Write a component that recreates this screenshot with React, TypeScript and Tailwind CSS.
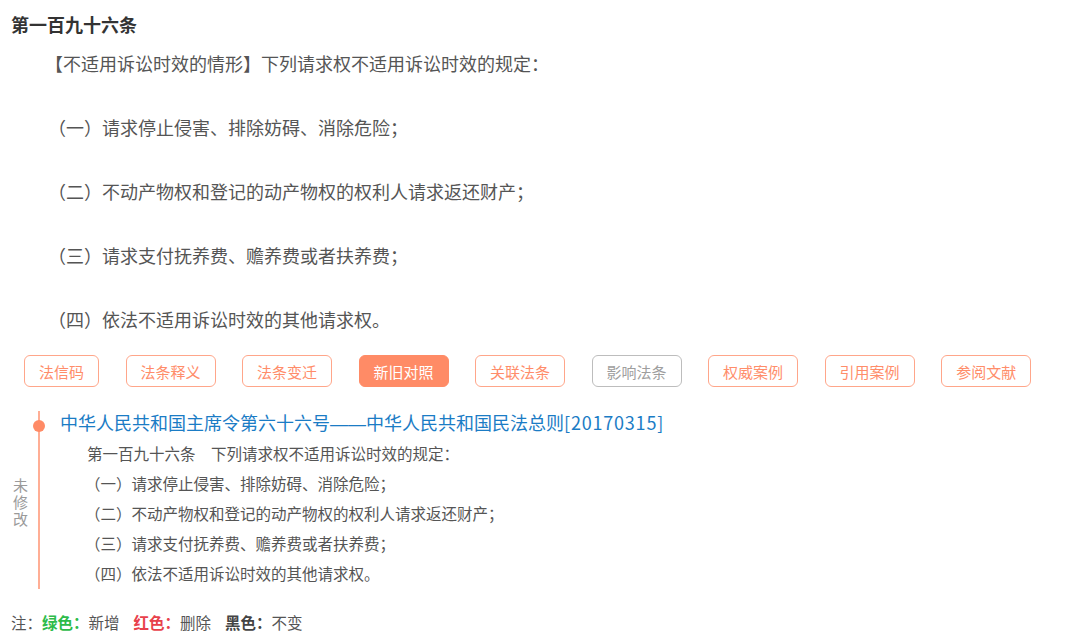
import React from 'react';

const FONT = { fontFamily: '"Microsoft YaHei", "Noto Sans CJK SC", "Noto Sans", sans-serif' };

const ITEMS = [
  '（一）请求停止侵害、排除妨碍、消除危险；',
  '（二）不动产物权和登记的动产物权的权利人请求返还财产；',
  '（三）请求支付抚养费、赡养费或者扶养费；',
  '（四）依法不适用诉讼时效的其他请求权。',
];

const TABS = [
  { label: '法信码', kind: 'normal' },
  { label: '法条释义', kind: 'normal' },
  { label: '法条变迁', kind: 'normal' },
  { label: '新旧对照', kind: 'active' },
  { label: '关联法条', kind: 'normal' },
  { label: '影响法条', kind: 'disabled' },
  { label: '权威案例', kind: 'normal' },
  { label: '引用案例', kind: 'normal' },
  { label: '参阅文献', kind: 'normal' },
];

const App: React.FC = () => {
  return (
    <div className="w-[1081px] h-[641px] bg-white px-[11px] pt-[10px] text-[#555]" style={FONT}>
      <h1 className="text-[18px] leading-[28px] font-bold text-[#333]">第一百九十六条</h1>

      <div className="mt-[11px] flex flex-col gap-[36px] text-[18px] leading-[28px]">
        <p className="pl-[34px]">【不适用诉讼时效的情形】下列请求权不适用诉讼时效的规定：</p>
        {ITEMS.map((t) => (
          <p key={t} className="pl-[37px]">{t}</p>
        ))}
      </div>

      {/* tab buttons */}
      <div className="mt-[22px] ml-[13px] flex gap-[26.5px]">
        {TABS.map((tab) => (
          <button
            key={tab.label}
            className={`h-[32px] px-[14px] rounded-[6px] border text-[15px] leading-none ${
              tab.kind === 'active'
                ? 'bg-[#ff8b66] border-[#ff8b66] text-white'
                : tab.kind === 'disabled'
                ? 'bg-white border-[#bdbdbd] text-[#9e9e9e]'
                : 'bg-white border-[#ffa68a] text-[#ff8d6a]'
            }`}
          >
            {tab.label}
          </button>
        ))}
      </div>

      {/* timeline */}
      <div className="mt-[24px] flex">
        <div className="w-[27px] flex items-center justify-center">
          <span className="[writing-mode:vertical-rl] tracking-[2px] text-[15px] leading-[17px] text-[#9a9a9a] pt-[6px] mr-[8px]">
            未修改
          </span>
        </div>
        <div className="relative border-l-2 border-[#ffae95] pl-[20px] pb-[1px]">
          <span className="absolute left-[-7px] top-[9px] w-[12px] h-[12px] rounded-full bg-[#ff8b66]" />
          <div className="h-[24px] text-[18px] leading-[24px] text-[#1b7cc5] -mt-[1px]">
            中华人民共和国主席令第六十六号<span className="font-['Liberation_Sans'] leading-none">——</span>中华人民共和国民法总则<span className="tracking-[0.8px]">[20170315]</span>
          </div>
          <div className="pl-[27px] text-[15.5px] leading-[30px] text-[#555] mt-[4px]">
            <p>第一百九十六条　下列请求权不适用诉讼时效的规定：</p>
            {ITEMS.map((t) => (
              <p key={t} className="-ml-[2px]">{t}</p>
            ))}
          </div>
        </div>
      </div>

      {/* legend */}
      <div className="mt-[21px] text-[15.5px] leading-[24px] text-[#555]">
        注：<span className="font-bold text-[#2dbb4a]">绿色：</span>新增
        <span className="ml-[14px] font-bold text-[#e8414b]">红色：</span>删除
        <span className="ml-[14px] font-bold text-[#444]">黑色：</span>不变
      </div>
    </div>
  );
};

export default App;
